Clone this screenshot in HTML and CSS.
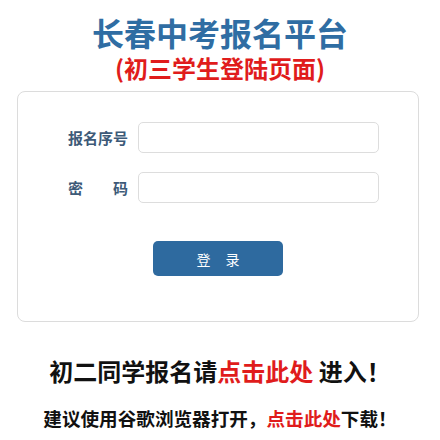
FILE: index.html
```html
<!DOCTYPE html>
<html lang="zh-CN">
<head>
    <meta charset="UTF-8">
    <meta name="viewport" content="width=device-width, initial-scale=1.0">
    <title>长春中考报名平台</title>
    <link rel="stylesheet" href="styles.css">
</head>
<body>

    <div class="header">
        <h1 class="title">长春中考报名平台</h1>
        <h2 class="subtitle">(初三学生登陆页面)</h2>
    </div>

    <div class="login-box">
        <form id="loginForm">
            <div class="form-row">
                <label for="regNo">报名序号</label>
                <input type="text" id="regNo" name="regNo">
            </div>
            <div class="form-row">
                <label for="pwd">密码</label>
                <input type="password" id="pwd" name="pwd">
            </div>
            <div class="btn-row">
                <button type="submit" class="login-btn">登 录</button>
            </div>
        </form>
    </div>

    <p class="notice">初二同学报名请<a href="#" class="red">点击此处</a> 进入！</p>
    <p class="notice small">建议使用谷歌浏览器打开，<a href="#" class="red">点击此处</a>下载！</p>

</body>
</html>
```

FILE: styles.css
```css
body {
    margin: 0;
    font-family: "Noto Sans CJK SC", "Liberation Sans", sans-serif;
    background-color: #fff;
}
.header {
    text-align: center;
    padding-top: 15px;
}
.title {
    margin: 0;
    font-size: 32px;
    line-height: 34px;
    font-weight: 700;
    color: #2f6da3;
}
.subtitle {
    margin: 5px 0 0;
    font-size: 24px;
    line-height: 28px;
    font-weight: 700;
    color: #e01c1c;
}
.login-box {
    margin: 9px 21px 0 17px;
    border: 1px solid #dcdcdc;
    border-radius: 8px;
    padding: 30px 0 0 50px;
    box-sizing: border-box;
    height: 231px;
}
.form-row {
    display: flex;
    align-items: center;
    gap: 10px;
    margin-bottom: 19px;
}
.form-row label {
    width: 60px;
    font-size: 15px;
    font-weight: 700;
    color: #3d5a78;
    text-align: justify;
    text-align-last: justify;
}
.form-row input {
    width: 241px;
    height: 31px;
    box-sizing: border-box;
    border: 1px solid #dddddd;
    border-radius: 5px;
    outline: none;
    padding: 0 8px;
}
.btn-row {
    display: flex;
    justify-content: center;
    padding-top: 19px;
    margin-left: -50px;
}
.login-btn {
    width: 130px;
    height: 35px;
    border: none;
    border-radius: 5px;
    background-color: #2e6a9f;
    color: #fff;
    font-family: "Noto Sans CJK SC", sans-serif;
    font-size: 14px;
    letter-spacing: 6px;
    text-indent: 6px;
    cursor: pointer;
}
.notice {
    margin: 34px 0 0;
    text-align: center;
    font-size: 24px;
    line-height: 30px;
    font-weight: 700;
    color: #111;
}
.notice.small {
    margin-top: 20px;
    font-size: 18.6px;
    line-height: 24px;
}
.red {
    color: #e01c1c;
    text-decoration: none;
}
```
